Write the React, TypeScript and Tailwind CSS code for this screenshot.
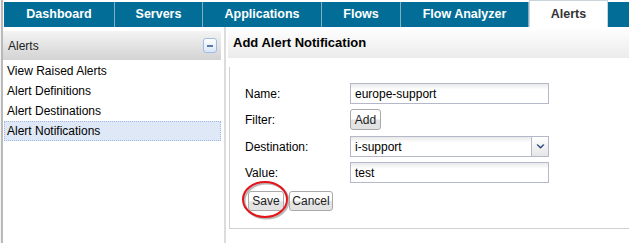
import React from 'react'

const tabs = [
  { label: 'Dashboard', w: 'w-[111px]' },
  { label: 'Servers', w: 'w-[88px]' },
  { label: 'Applications', w: 'w-[119px]' },
  { label: 'Flows', w: 'w-[79px]' },
  { label: 'Flow Analyzer', w: 'w-[128px]' },
]

const menu = ['View Raised Alerts', 'Alert Definitions', 'Alert Destinations', 'Alert Notifications']

function Btn({ label, w, h = 'h-[20px]' }: { label: string; w: string; h?: string }) {
  return (
    <button
      type="button"
      className={`${w} ${h} rounded-[3px] border border-[#a9a9a9] bg-linear-to-b from-white from-[45%] to-[#e3e3e3] to-[55%] text-[12px] leading-none text-[#222] font-['Liberation_Sans',sans-serif]`}
    >
      {label}
    </button>
  )
}

function Field({ value }: { value: string }) {
  return (
    <input
      readOnly
      value={value}
      className="h-[21px] w-[199px] border border-[#b5b8c8] bg-linear-to-b from-[#e9e9e9] to-white to-[30%] px-[4px] text-[12px] text-black outline-none font-['Liberation_Sans',sans-serif]"
    />
  )
}

export default function App() {
  return (
    <div className="flex h-[243px] w-[629px] overflow-hidden bg-white font-['Liberation_Sans',sans-serif] text-[12px] text-black">
      <div className="w-[1px] bg-[#f4f4f4]" />
      <div className="w-[2px] bg-[#b9b9b9]" />
      <div className="flex flex-1 flex-col">
        {/* tab strip */}
        <div className="flex h-[27px] items-end pl-[1px]">
          {tabs.map((t) => (
            <div
              key={t.label}
              className={`${t.w} flex h-[25px] items-center justify-center border-r border-[#86aec3] bg-[#026e98] pb-[1px] text-[12.5px] font-bold text-white`}
            >
              {t.label}
            </div>
          ))}
          <div className="flex h-[27px] w-[79px] items-center justify-center border-x border-t border-[#c9d5dc] bg-white pt-[1px] text-[12.5px] font-bold text-[#333]">
            Alerts
          </div>
          <div className="h-[25px] flex-1 bg-[#026e98]" />
        </div>

        <div className="flex flex-1">
          {/* left nav */}
          <div className="flex w-[218px] flex-col pt-[4px]">
            <div className="flex h-[29px] items-center justify-between bg-linear-to-b from-[#f4f4f4] to-[#d3d3d3] pl-[5px] pr-[4px]">
              <span className="text-[12px] text-[#222]">Alerts</span>
              <div className="flex h-[15px] w-[14px] items-center justify-center rounded-[3px] border border-[#9fbde4] bg-linear-to-b from-white to-[#d9e6f6]">
                <div className="h-[2px] w-[6px] bg-[#5a7aa8]" />
              </div>
            </div>
            <div className="flex flex-col pt-[1px] pl-[1px]">
              {menu.map((m) => (
                <div
                  key={m}
                  className={
                    m === 'Alert Notifications'
                      ? 'flex h-[20px] items-center border border-dotted border-[#9fb8e6] bg-[#dfe8f6] pl-[2px]'
                      : 'flex h-[20px] items-center border border-transparent pl-[2px]'
                  }
                >
                  {m}
                </div>
              ))}
            </div>
          </div>

          {/* splitter */}
          <div className="w-[3px]" />
          <div className="w-[2px] bg-[#dcdcdc]" />
          <div className="w-[2px]" />

          {/* content */}
          <div className="flex flex-1 flex-col">
            <div className="flex h-[31px] items-center bg-linear-to-b from-white to-[#ebebeb] pl-[5px] text-[13px] font-bold text-black">
              Add Alert Notification
            </div>
            <div className="ml-[1px] mt-[9px] h-[162px] border-b border-l border-[#d0d0d0] pl-[15px] pt-[16px]">
              <div className="grid grid-cols-[105px_199px] items-center gap-y-[5px]">
                <span>Name:</span>
                <Field value="europe-support" />
                <span>Filter:</span>
                <div className="flex">
                  <Btn label="Add" w="w-[31px]" h="h-[21px]" />
                </div>
                <span className="pt-[1px]">Destination:</span>
                <div className="flex h-[21px] mt-[1px] border border-[#b5b8c8] bg-white">
                  <div className="flex flex-1 items-center bg-linear-to-b from-[#e9e9e9] to-white to-[30%] px-[4px] text-[12px]">i-support</div>
                  <div className="flex w-[17px] items-center justify-center border-l border-[#b5b8c8] bg-linear-to-b from-white to-[#e6e6e6]">
                    <svg width="9" height="6" viewBox="0 0 9 6">
                      <path d="M0.5 0.8 L4.5 4.8 L8.5 0.8 L7.2 0.2 L4.5 2.8 L1.8 0.2 Z" fill="#22447e" />
                    </svg>
                  </div>
                </div>
                <span>Value:</span>
                <Field value="test" />
              </div>
              <div className="mt-[8px] flex gap-[5px] pl-[3px]">
                <div className="relative">
                  <Btn label="Save" w="w-[36px]" />
                  <svg
                    className="pointer-events-none absolute left-[-8px] top-[-12px]"
                    width="54"
                    height="46"
                    viewBox="0 0 54 46"
                  >
                    <ellipse cx="26.5" cy="22" rx="22" ry="17.5" fill="none" stroke="#b8b8b8" strokeWidth="2" />
                    <ellipse cx="25" cy="20.5" rx="22" ry="17.5" fill="none" stroke="#e4141b" strokeWidth="2" />
                  </svg>
                </div>
                <Btn label="Cancel" w="w-[44px]" />
              </div>
            </div>
          </div>
        </div>
      </div>
    </div>
  )
}
